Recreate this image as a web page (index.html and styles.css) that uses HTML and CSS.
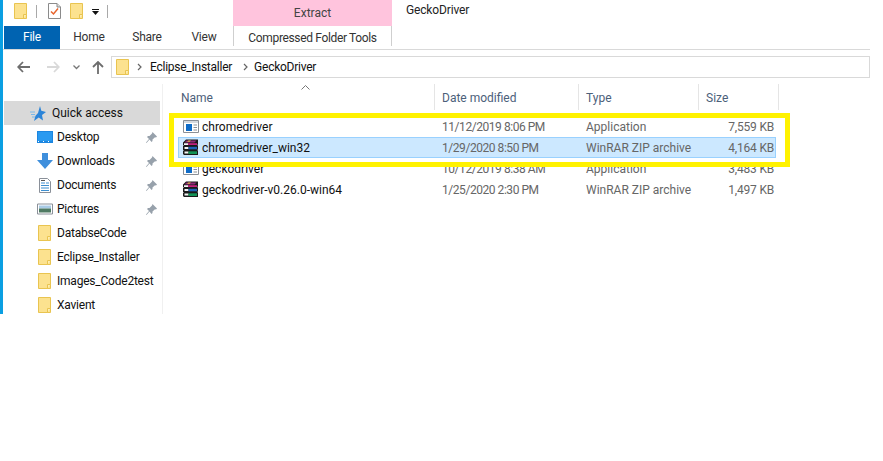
FILE: index.html
```html
<!DOCTYPE html>
<html lang="en">
<head>
<meta charset="utf-8">
<title>GeckoDriver</title>
<link rel="stylesheet" href="styles.css">
</head>
<body>
<svg class="defs" width="0" height="0" aria-hidden="true">
  <symbol id="folder" viewBox="0 0 13 16">
    <path d="M.5.5h12v15H.5z" fill="#fce28f" stroke="#e9c450"/>
    <path d="M9.500 15.500v-4h3" fill="#fdeeb5" stroke="#e9c450"/>
  </symbol>
  <symbol id="app" viewBox="0 0 16 13">
    <path d="M.5.5h15v12H.5z" fill="#fff" stroke="#8a8f96"/>
    <path d="M1 1h14v2H1z" fill="#d5d9de"/>
    <path d="M3 4h6v7H3z" fill="#0f6cc8"/>
    <path d="M10.500 5h3.500M10.500 7.500h3.500M10.500 10h3.500" stroke="#8a8f96"/>
  </symbol>
  <symbol id="rar" viewBox="0 0 17 17">
    <path d="M1 3.500L4 .5h12v5l-1 .5 1 .5v4l-1 .5 1 .5v4.500H2L1 15v-3l1-.5-1-.5V7l1-.5L1 6z" fill="#1a1a1a"/>
    <path d="M2.500 3.500L4.500 1.500h10l-2 2z" fill="#8e2a78"/>
    <path d="M5 2.800l1.500-1.300h2.500L7.500 2.800z" fill="#e6c23c"/>
    <path d="M2 4.200h4v1.800H2zM2.500 8h4v2h-4zM2.500 12.500h4v2h-4z" fill="#f4f4f4"/>
    <path d="M6 4.200h9V6H6z" fill="#c2207f"/>
    <path d="M6.500 7.800H15v2.500H6.500z" fill="#1e63b8"/>
    <path d="M6.500 12.300H15v2.700H6.500z" fill="#149457"/>
  </symbol>
  <symbol id="pin" viewBox="0 0 11 11">
    <path d="M6.500 0l4.500 4.500-1 1-1-.3L6.500 7.500V9L5.500 10 3.500 7.500.5 11 0 10.500 3 7 1 5 2 4h1.500L6 1.500z" fill="#97a1ab"/>
  </symbol>
</svg>

<div class="window">
  <header class="titlebar">
    <div class="qat">
      <svg class="ic-qat"><use href="#folder"/></svg>
      <span class="qat-sep sep-a"></span>
      <svg class="ic-prop" viewBox="0 0 13 16"><path d="M.5.5h8.500l3.500 3.500v11.500H.5z" fill="#fff" stroke="#8b8b8b"/><path d="M9 .5v3.500h3.500" fill="#ddd" stroke="#8b8b8b"/><path d="M3 8.500l2.500 2.500 4.500-5.500" fill="none" stroke="#e8642c" stroke-width="1.500"/></svg>
      <svg class="ic-qat ic-folder2"><use href="#folder"/></svg>
      <svg class="ic-more" viewBox="0 0 7 6"><path d="M0 0h7v1H0zM0 2h7L3.500 6z" fill="#111"/></svg>
      <span class="qat-sep"></span>
    </div>
    <div class="extract">Extract</div>
    <div class="doc-title">GeckoDriver</div>
  </header>

  <nav class="tabs">
    <div class="tab tab-file">File</div>
    <div class="tab tab-home">Home</div>
    <div class="tab tab-share">Share</div>
    <div class="tab tab-view">View</div>
    <div class="tab tab-tools">Compressed Folder Tools</div>
  </nav>

  <div class="nav">
    <svg class="nav-ic nav-back" viewBox="0 0 13 12"><path d="M6 1L1.200 6 6 11M1.500 6H13" fill="none" stroke="#6d6d6d" stroke-width="1.800"/></svg>
    <svg class="nav-ic nav-fwd" viewBox="0 0 13 12"><path d="M7 1l4.800 5L7 11M11.500 6H0" fill="none" stroke="#d9d9d9" stroke-width="1.800"/></svg>
    <svg class="nav-chev" viewBox="0 0 7 5"><path d="M.5.500l3 3 3-3" fill="none" stroke="#777" stroke-width="1.300"/></svg>
    <svg class="nav-ic nav-up" viewBox="0 0 12 13"><path d="M1 6l5-5 5 5M6 1.500V13" fill="none" stroke="#6d6d6d" stroke-width="1.800"/></svg>
    <div class="address">
      <svg class="addr-folder"><use href="#folder"/></svg>
      <svg class="crumb-sep" viewBox="0 0 5 8"><path d="M1 1l3 3-3 3" fill="none" stroke="#666" stroke-width="1.200"/></svg>
      <span class="crumb">Eclipse_Installer</span>
      <svg class="crumb-sep" viewBox="0 0 5 8"><path d="M1 1l3 3-3 3" fill="none" stroke="#666" stroke-width="1.200"/></svg>
      <span class="crumb">GeckoDriver</span>
    </div>
  </div>

  <div class="main">
    <aside class="sidebar">
      <div class="side-row side-quick">
        <svg class="side-star" viewBox="0 0 16 15"><path d="M10 0l1.300 4.800L16 6l-4 3 1 5.500-4.300-3L4 15l1.500-5.200L8 7z" fill="#2b84d8"/><path d="M0 6h5M1 8.500h4M2 11h3" stroke="#79b8ea"/></svg>
        <span>Quick access</span>
      </div>
      <div class="side-row">
        <svg class="side-ic" viewBox="0 0 16 12"><path d="M0 0h16v12H0z" fill="#1c86e0"/><path d="M1 1h14v9H1z" fill="#2a9af0"/><path d="M1 10.500h14" stroke="#fff" stroke-dasharray="1 4"/></svg>
        <span class="side-label">Desktop</span>
        <svg class="pin"><use href="#pin"/></svg>
      </div>
      <div class="side-row">
        <svg class="side-ic side-ic-dl" viewBox="0 0 16 16"><path d="M5 0h6v7h5l-8 9-8-9h5z" fill="#3f8fdc"/></svg>
        <span class="side-label">Downloads</span>
        <svg class="pin"><use href="#pin"/></svg>
      </div>
      <div class="side-row">
        <svg class="side-ic side-ic-doc" viewBox="0 0 12 15"><path d="M.5.500h8l3 3v11H.5z" fill="#fff" stroke="#8a9099"/><path d="M2 5h4M7 5h3M2 7.500h8M2 10h8M2 12.500h8" stroke="#3c8fd0"/><path d="M2 2.500h4" stroke="#555"/></svg>
        <span class="side-label">Documents</span>
        <svg class="pin"><use href="#pin"/></svg>
      </div>
      <div class="side-row">
        <svg class="side-ic" viewBox="0 0 16 11"><path d="M.5.500h15v10H.5z" fill="#fff" stroke="#8a9099"/><path d="M2 2h12v3H2z" fill="#a9cbe6"/><path d="M2 5h12v4H2z" fill="#4f7a63"/></svg>
        <span class="side-label">Pictures</span>
        <svg class="pin"><use href="#pin"/></svg>
      </div>
      <div class="side-row"><svg class="side-folder"><use href="#folder"/></svg><span class="side-label">DatabseCode</span></div>
      <div class="side-row"><svg class="side-folder"><use href="#folder"/></svg><span class="side-label">Eclipse_Installer</span></div>
      <div class="side-row"><svg class="side-folder"><use href="#folder"/></svg><span class="side-label">Images_Code2test</span></div>
      <div class="side-row"><svg class="side-folder"><use href="#folder"/></svg><span class="side-label">Xavient</span></div>
    </aside>

    <section class="files">
      <svg class="sort-arrow" viewBox="0 0 9 5"><path d="M.5 4.500l4-4 4 4" fill="none" stroke="#777"/></svg>
      <div class="head">
        <div class="hcell hcell-name">Name</div>
        <div class="hcell">Date modified</div>
        <div class="hcell">Type</div>
        <div class="hcell">Size</div>
      </div>
      <div class="list">
        <div class="row">
          <div class="cell-name"><svg class="file-ic"><use href="#app"/></svg><span>chromedriver</span></div>
          <div class="cell cell-date">11/12/2019 8:06 PM</div>
          <div class="cell">Application</div>
          <div class="cell-size">7,559 KB</div>
        </div>
        <div class="row row-selected">
          <div class="cell-name"><svg class="file-ic file-ic-rar"><use href="#rar"/></svg><span>chromedriver_win32</span></div>
          <div class="cell cell-date">1/29/2020 8:50 PM</div>
          <div class="cell">WinRAR ZIP archive</div>
          <div class="cell-size">4,164 KB</div>
        </div>
        <div class="row">
          <div class="cell-name"><svg class="file-ic"><use href="#app"/></svg><span>geckodriver</span></div>
          <div class="cell cell-date">10/12/2019 8:38 AM</div>
          <div class="cell">Application</div>
          <div class="cell-size">3,483 KB</div>
        </div>
        <div class="row">
          <div class="cell-name"><svg class="file-ic file-ic-rar"><use href="#rar"/></svg><span>geckodriver-v0.26.0-win64</span></div>
          <div class="cell cell-date">1/25/2020 2:30 PM</div>
          <div class="cell">WinRAR ZIP archive</div>
          <div class="cell-size">1,497 KB</div>
        </div>
      </div>
      <div class="highlight"></div>
    </section>
  </div>
</div>
</body>
</html>
```

FILE: styles.css
```css
* { box-sizing: border-box; }
html, body { margin: 0; padding: 0; background: #fff; }
body { font: 12px/16px Roboto, "Noto Sans", sans-serif; color: #000; overflow: hidden; }
.defs { position: absolute; }
svg { display: block; flex: none; }

.window {
  width: 870px;
  height: 314px;
  border-left: 3px solid #0a9fe2;
  display: flex;
  flex-direction: column;
  overflow: hidden;
}

/* title bar */
.titlebar { height: 26px; display: flex; flex: none; }
.qat { width: 230px; display: flex; align-items: center; padding: 0 0 4px 11px; }
.ic-qat { width: 13px; height: 16px; }
.qat-sep { width: 1px; height: 13px; background: #a9a9a9; margin-left: 8px; }
.sep-a { margin-left: 9px; margin-right: 11px; }
.ic-prop { width: 13px; height: 16px; }
.ic-folder2 { margin-left: 9px; }
.ic-more { width: 7px; height: 6px; margin-left: 9px; margin-top: 1px; }
.extract { width: 159px; background: #ffc4dd; color: #444; text-align: center; padding-top: 5px; }
.doc-title { padding: 2px 0 0 14px; color: #222; letter-spacing: -.15px; }

/* ribbon tabs */
.tabs { height: 24px; display: flex; flex: none; border-bottom: 1px solid #d9d9d9; color: #333; letter-spacing: -.2px; }
.tab { height: 23px; line-height: 23px; text-align: center; }
.tab-file { width: 56px; margin-left: 1px; background: #0063b1; color: #fff; }
.tab-home { width: 58px; }
.tab-share { width: 58px; }
.tab-view { width: 56px; margin-right: 1px; }
.tab-tools {
  width: 159px;
  border-left: 1px solid #cfcfcf;
  border-right: 1px solid #cfcfcf;
  height: 20px;
  line-height: 24px;
  letter-spacing: -.35px;
}

/* navigation */
.nav { height: 34px; flex: none; display: flex; align-items: center; padding: 6px 0 6px 14px; }
.nav-ic { width: 13px; height: 12px; }
.nav-fwd { margin-left: 17px; }
.nav-chev { width: 7px; height: 5px; margin-left: 13px; }
.nav-up { width: 12px; height: 13px; margin-left: 12px; }
.address {
  width: 760px;
  height: 22px;
  margin-left: 7px;
  border: 1px solid #d9d9d9;
  display: flex;
  align-items: center;
  padding-left: 4px;
  color: #111;
}
.addr-folder { width: 13px; height: 16px; }
.crumb-sep { width: 5px; height: 8px; margin: 0 8px 0 8px; }
.crumb { letter-spacing: -.25px; }
.crumb + .crumb-sep { margin-left: 11px; margin-right: 6px; }

/* main area */
.main { flex: 1; min-height: 0; display: flex; }
.sidebar { width: 160px; flex: none; padding: 17px 0 0 1px; border-right: 1px solid #f0f0f0; overflow: hidden; }
.side-row { height: 24px; width: 156px; display: flex; align-items: center; padding-left: 33px; color: #111; }
.side-quick { background: #d9d9d9; padding-left: 26px; }
.side-star { width: 16px; height: 15px; margin-right: 6px; }
.side-ic { width: 16px; height: 12px; }
.side-ic-dl { height: 16px; }
.side-ic-doc { width: 12px; height: 15px; margin: 0 2px; }
.side-folder { width: 13px; height: 16px; margin: 0 2px 0 1px; }
.side-label { margin-left: 4px; letter-spacing: -.22px; }
.pin { width: 11px; height: 11px; margin-left: auto; margin-right: 3px; }

/* file list */
.files { flex: 1; position: relative; padding-left: 15px; }
.sort-arrow { position: absolute; left: 138px; top: 1px; width: 9px; height: 5px; }
.head {
  height: 26px;
  display: grid;
  grid-template-columns: 257px 144px 120px 80px;
  color: #4c607a;
  margin-bottom: 6px;
}
.hcell { border-right: 1px solid #e5e5e5; padding: 6px 0 0 7px; height: 26px; }
.hcell-name { padding-left: 3px; }
.row {
  height: 21px;
  width: 598px;
  display: grid;
  grid-template-columns: 257px 144px 120px 77px;
  align-items: center;
  color: #666;
  border: 1px solid transparent;
}
.row-selected { background: #cce8ff; border-color: #99d1ff; }
.cell-name { display: flex; align-items: center; padding-left: 4px; color: #111; }
.file-ic { width: 16px; height: 13px; margin-right: 3px; }
.file-ic-rar { width: 17px; height: 17px; margin-left: -1px; }
.cell { padding-left: 6px; }
.cell-date { letter-spacing: -.45px; }
.cell-size { text-align: right; padding-right: 3px; letter-spacing: -.2px; }
.highlight {
  position: absolute;
  left: 6px;
  top: 29px;
  width: 621px;
  height: 54px;
  border: 5px solid #fff200;
  pointer-events: none;
}
```
